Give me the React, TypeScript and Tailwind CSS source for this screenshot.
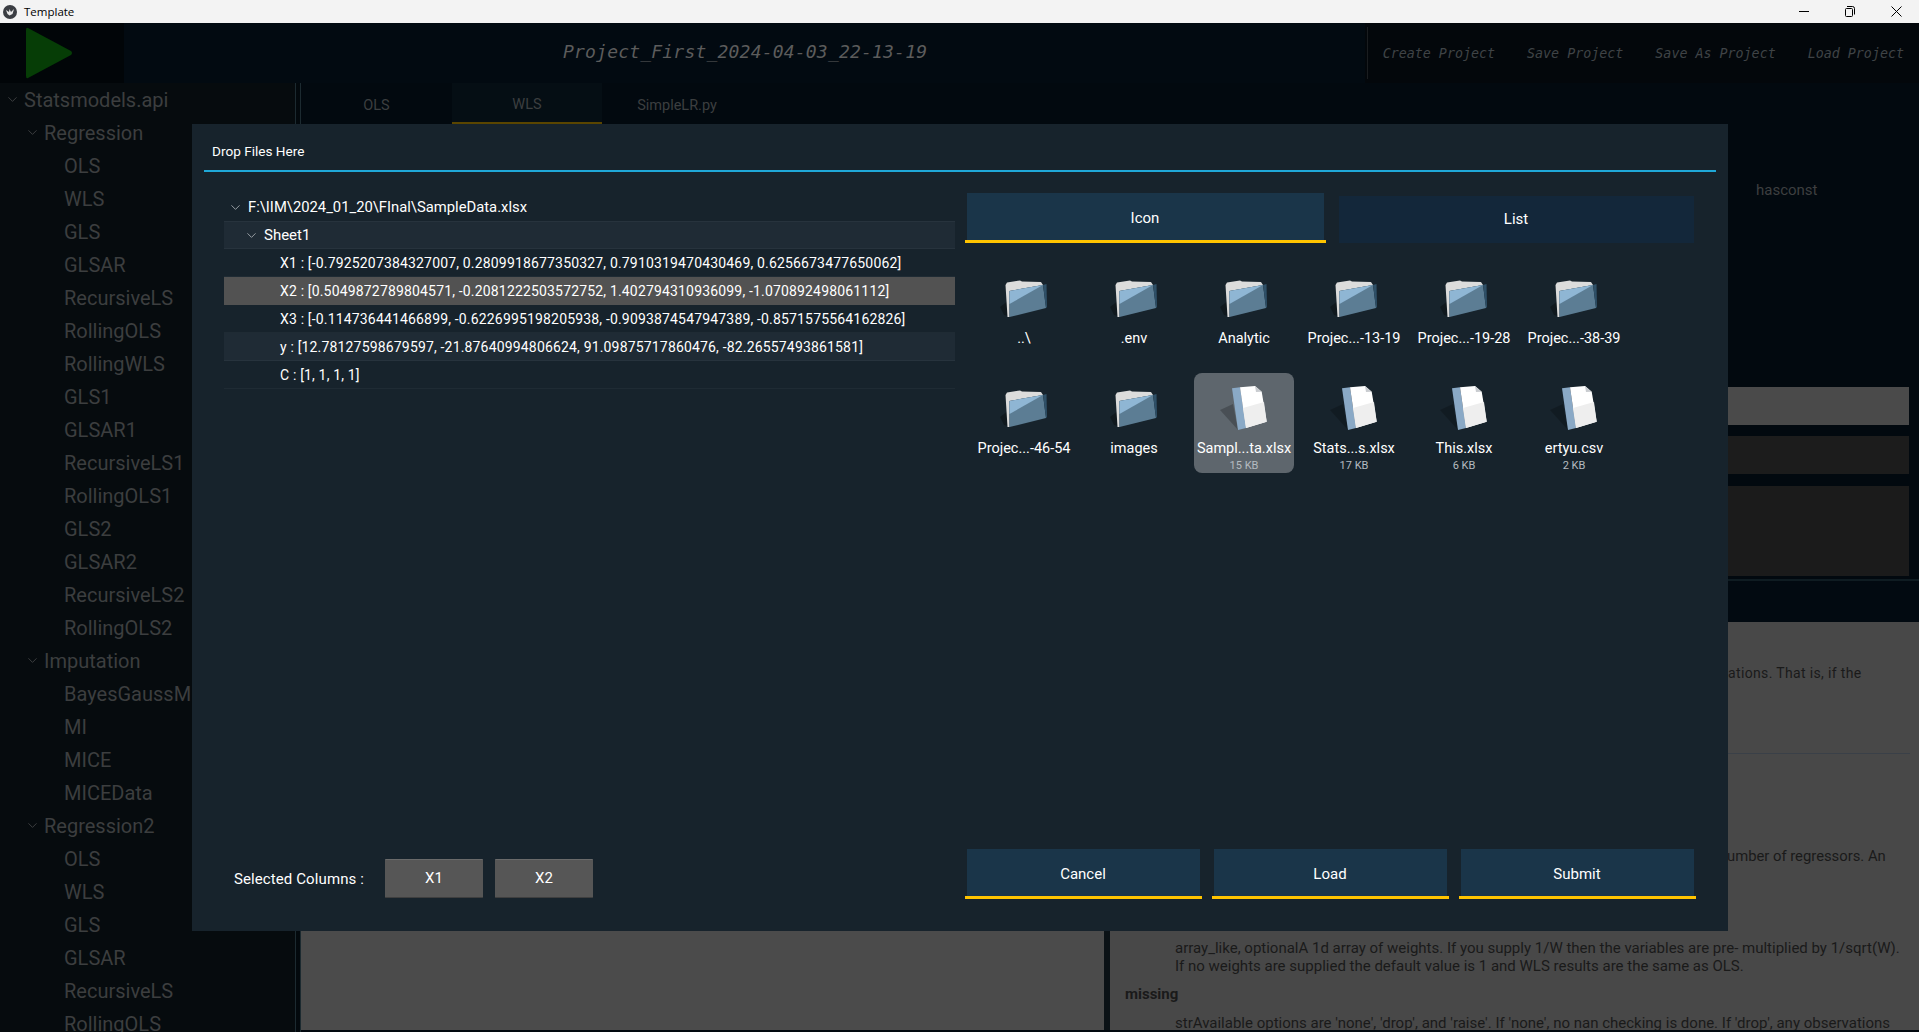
import { ChevronDown } from "lucide-react";

const sans = "font-['Roboto',sans-serif]";

type TreeItem = { label: string; level: number; open?: boolean };

const apiTree: TreeItem[] = [
  { label: "Statsmodels.api", level: 0, open: true },
  { label: "Regression", level: 1, open: true },
  ...["OLS", "WLS", "GLS", "GLSAR", "RecursiveLS", "RollingOLS", "RollingWLS", "GLS1", "GLSAR1", "RecursiveLS1", "RollingOLS1", "GLS2", "GLSAR2", "RecursiveLS2", "RollingOLS2"].map((label) => ({ label, level: 2 })),
  { label: "Imputation", level: 1, open: true },
  ...["BayesGaussMI", "MI", "MICE", "MICEData"].map((label) => ({ label, level: 2 })),
  { label: "Regression2", level: 1, open: true },
  ...["OLS", "WLS", "GLS", "GLSAR", "RecursiveLS", "RollingOLS"].map((label) => ({ label, level: 2 })),
];

const dataRows = [
  { text: "X1 : [-0.7925207384327007, 0.2809918677350327, 0.7910319470430469, 0.6256673477650062]", cls: "border-[#1f2b34]" },
  { text: "X2 : [0.5049872789804571, -0.2081222503572752, 1.402794310936099, -1.070892498061112]", cls: "bg-[#525252] border-[#525252]" },
  { text: "X3 : [-0.114736441466899, -0.6226995198205938, -0.9093874547947389, -0.8571575564162826]", cls: "border-[#1f2b34]" },
  { text: "y : [12.78127598679597, -21.87640994806624, 91.09875717860476, -82.26557493861581]", cls: "bg-[#1f2b35] border-[#27333d]" },
  { text: "C : [1, 1, 1, 1]", cls: "border-[#1f2b34]" },
];

const files = [
  { name: "..\\", kind: "folder" },
  { name: ".env", kind: "folder" },
  { name: "Analytic", kind: "folder" },
  { name: "Projec...-13-19", kind: "folder" },
  { name: "Projec...-19-28", kind: "folder" },
  { name: "Projec...-38-39", kind: "folder" },
  { name: "Projec...-46-54", kind: "folder" },
  { name: "images", kind: "folder" },
  { name: "Sampl...ta.xlsx", kind: "file", size: "15 KB", selected: true },
  { name: "Stats...s.xlsx", kind: "file", size: "17 KB" },
  { name: "This.xlsx", kind: "file", size: "6 KB" },
  { name: "ertyu.csv", kind: "file", size: "2 KB" },
];

function FolderIcon() {
  return (
    <svg width="47" height="38" viewBox="0 0 47 38">
      <polygon points="0,27 9,20 9,36 4,35" fill="#000" opacity="0.3" />
      <polygon points="5.5,5 7,2.5 20,0.5 22,1.5 41,2 43,5 9.5,11 9.5,37 7.5,37" fill="#dcdcdc" />
      <polygon points="9.5,11 43,5 46,28 9.5,37" fill="#5c7d94" />
      <polygon points="9.5,11 43,5 9.5,24" fill="#8fb6d4" />
      <polygon points="43,5 46.5,4 47,27 46,28" fill="#2f5068" />
    </svg>
  );
}

function FileIcon() {
  return (
    <svg width="47" height="45" viewBox="0 0 47 45">
      <polygon points="0,24 13,18 18,44" fill="#000" opacity="0.22" />
      <polygon points="12,2.3 20,1.3 26,42 18,44" fill="#8aa9c6" />
      <polygon points="20,1.3 35,0 41.7,5.7 46.7,35.7 26,42" fill="#ffffff" />
      <polygon points="23,22 44,16 46.7,35.7 26,42" fill="#eeeeee" />
      <polygon points="35,0 41.7,5.7 36,6" fill="#c9ccd0" />
    </svg>
  );
}

function KivyLogo() {
  return (
    <svg width="14" height="14" viewBox="0 0 14 14">
      <circle cx="7" cy="7" r="7" fill="#3a3d42" />
      <path d="M3 5 L6 7 L6.5 4 L8 7 L11 4 L9.5 9 L6.5 10.5 L4.5 9 Z" fill="#e8e8e8" />
    </svg>
  );
}

function YellowButton({ label, active = true, bg = "bg-[#1a3549]" }: { label: string; active?: boolean; bg?: string }) {
  return (
    <div className={`flex flex-col ${active ? "" : "pt-[3px]"}`}>
      <div className={`mx-[2px] flex flex-1 items-center justify-center pr-[1px] text-[15px] text-white ${bg} ${active ? "pt-[3px]" : ""}`}>{label}</div>
      {active && <div className="h-[3px] bg-[#ffc400]" />}
    </div>
  );
}

export default function App() {
  return (
    <div className={`relative flex h-[1032px] w-full flex-col overflow-hidden bg-[#02090f] ${sans}`}>
      {/* window title bar */}
      <div className="flex h-[23px] shrink-0 items-center bg-[#f3f3f3]">
        <div className="ml-[3px] mr-[7px] flex">
          <KivyLogo />
        </div>
        <span className="font-['Open_Sans',sans-serif] text-[11.5px] text-black">Template</span>
        <div className="ml-auto flex items-center text-black">
          <div className="flex w-[46px] justify-center">
            <div className="h-px w-[10px] bg-black" />
          </div>
          <div className="flex w-[46px] justify-center pr-[2px]">
            <svg width="11" height="11" viewBox="0 0 11 11" fill="none" stroke="#000">
              <rect x="1.5" y="2.5" width="7" height="8" rx="1" />
              <path d="M3 0.5h5.5a2 2 0 0 1 2 2v6" />
            </svg>
          </div>
          <div className="flex w-[46px] justify-center">
            <svg width="11" height="11" viewBox="0 0 11 11" stroke="#000">
              <path d="M0.5 0.5l10 10M10.5 0.5l-10 10" />
            </svg>
          </div>
        </div>
      </div>

      {/* app header */}
      <div className="flex h-[60px] shrink-0 bg-[#020a11] font-['DejaVu_Sans_Mono',monospace] italic">
        <div className="flex w-[124px] shrink-0 items-center bg-[#010508] pl-[26px]">
          <svg width="46" height="52" viewBox="0 0 46 52">
            <path d="M2 1 L45 24 Q47 26 45 28 L2 51 Q0 52 0 49 V3 Q0 0 2 1 Z" fill="#063d06" />
          </svg>
        </div>
        <div className="flex flex-1 items-center pb-[4px] pl-[439px] text-[18px] tracking-[0.2px] text-[#5c5c5c]">Project_First_2024-04-03_22-13-19</div>
        <div className="flex items-center gap-[32px] bg-[#03070b] pl-[18px] pr-[15px] pt-[2px] text-[13.33px] text-[#3f4346]">
          <div className="absolute left-[1367px] top-[27px] h-[52px] w-px bg-[#1a1d20]" />
          <span>Create Project</span>
          <span>Save Project</span>
          <span>Save As Project</span>
          <span>Load Project</span>
        </div>
      </div>

      <div className="flex min-h-0 flex-1">
        {/* api tree */}
        <div className="w-[295px] shrink-0 overflow-hidden bg-[#060b0e]">
          {apiTree.map((item, i) => (
            <div key={i} className={`flex h-[33px] shrink-0 items-center text-[20px] leading-none text-[#3c3e3f] ${item.level === 0 ? "pl-[5px]" : item.level === 1 ? "pl-[25px]" : "pl-[64px]"}`}>
              {item.open && <ChevronDown size={15} strokeWidth={1.25} className="mr-[4px] shrink-0 text-[#4a4c4d]" />}
              <span className="whitespace-nowrap">{item.label}</span>
            </div>
          ))}
        </div>
        <div className="w-[6px] shrink-0 border-x border-[#1c2a30] bg-[#03090d]" />

        <div className="flex min-w-0 flex-1 flex-col">
          {/* editor tabs */}
          <div className="flex h-[41px] shrink-0 bg-[#02090f] text-[14.5px] text-[#3c3f40]">
            <div className="flex w-[151px] items-center justify-center pt-[4px]">OLS</div>
            <div className="flex w-[150px] items-center justify-center border-b-2 border-[#5a4500] bg-[#050e14] pt-[4px]">WLS</div>
            <div className="flex w-[150px] items-center justify-center pt-[4px]">SimpleLR.py</div>
          </div>

          <div className="flex min-h-0 flex-1 pb-[2px]">
            <div className="flex w-[803px] shrink-0 flex-col justify-end">
              <div className="h-[200px] bg-[#4b4b4b]" />
            </div>
            <div className="w-[6px] shrink-0 bg-[#0b1216]" />

            <div className="flex min-w-0 flex-1 flex-col">
              <div className="h-[455px] shrink-0 pr-[10px] pt-[55px]">
                <div className="h-[27px] pl-[646px] text-[15px] text-[#3d3f40]">hasconst</div>
                <div className="mt-[181px] h-[38px] bg-[#4a4a4a]" />
                <div className="mt-[11px] h-[38px] bg-[#1c1c1c]" />
                <div className="mt-[12px] h-[90px] bg-[#1b1b1b]" />
              </div>
              <div className="flex h-[43px] shrink-0 border-t-2 border-[#0f1c22] bg-[#020a11]" />
              {/* api documentation */}
              <div className="flex-1 overflow-hidden bg-[#484848] pl-[15px] text-[15px] text-[#1a1a1a]">
                <p className="mb-[69px] mt-[41px] whitespace-nowrap pl-[603px] text-[14px] tracking-[0.35px]">ations. That is, if the</p>
                <div className="mr-[9px] h-px bg-[#3a4048]" />
                <p className="mt-[91px] whitespace-nowrap pl-[602px] text-[14.8px]">umber of regressors. An</p>
                <div className="mt-[72px] whitespace-nowrap pl-[50px] leading-[18px]">
                  <p>array_like, optionalA 1d array of weights. If you supply 1/W then the variables are pre- multiplied by 1/sqrt(W).</p>
                  <p>If no weights are supplied the default value is 1 and WLS results are the same as OLS.</p>
                </div>
                <p className="mt-[8px] font-bold">missing</p>
                <p className="mt-[8px] whitespace-nowrap pl-[50px] leading-[18px]">strAvailable options are 'none', 'drop', and 'raise'. If 'none', no nan checking is done. If 'drop', any observations</p>
              </div>
            </div>
          </div>
        </div>
      </div>

      {/* file dialog */}
      <div className="absolute left-[192px] top-[124px] flex h-[807px] w-[1536px] flex-col bg-[#17232c]">
        <div className="ml-[12px] mr-[12px] flex h-[48px] shrink-0 items-center border-b-2 border-[#1fa8d8] pl-[8px] pt-[8px] text-[13.6px] text-white">Drop Files Here</div>

        <div className="flex min-h-0 flex-1 gap-[10px] pb-[32px] pl-[32px] pr-[32px] pt-[21px]">
          {/* sheet tree */}
          <div className="flex w-[731px] shrink-0 flex-col justify-between">
            <div className="text-[14px] text-white">
              <div className="flex h-[28px] items-center pl-[4px] text-[14.8px]">
                <ChevronDown size={15} strokeWidth={1.25} className="mr-[5px] text-[#b9bec2]" />
                <span>F:\IIM\2024_01_20\FInal\SampleData.xlsx</span>
              </div>
              <div className="flex h-[28px] items-center border-y border-[#27333d] bg-[#1f2b35] pl-[20px] text-[15px]">
                <ChevronDown size={15} strokeWidth={1.25} className="mr-[5px] text-[#b9bec2]" />
                <span>Sheet1</span>
              </div>
              {dataRows.map((row) => (
                <div key={row.text} className={`flex h-[28px] items-center border-b pl-[56px] pt-[1px] tracking-[0.17px] ${row.cls}`}>{row.text}</div>
              ))}
            </div>
            <div className="flex items-center pb-[1px] pl-[10px] text-[15px] text-white">
              <span className="w-[151px] pt-[2px] tracking-[0.1px]">Selected Columns :</span>
              {["X1", "X2"].map((col) => (
                <div key={col} className="mr-[12px] flex h-[39px] w-[98px] items-center justify-center rounded-[1px] border-y border-t-[#6a6a6a] border-b-[#3f3f3f] bg-[#565656]">{col}</div>
              ))}
            </div>
          </div>

          <div className="flex min-w-0 flex-1 flex-col">
            <div className="grid h-[50px] shrink-0 grid-cols-[361px_359px] gap-[11px]">
              <YellowButton label="Icon" />
              <YellowButton label="List" active={false} bg="bg-[#13273a]" />
            </div>
            {/* file browser */}
            <div className="mt-[20px] grid grid-cols-[repeat(6,100px)] gap-[10px] pl-[9px]">
              {files.map((f) => (
                <div key={f.name} className={`flex h-[100px] flex-col items-center rounded-[8px] pt-[13px] ${f.selected ? "bg-[#5e666d]" : ""}`}>
                  <div className="mr-[2px] flex h-[45px] items-center">{f.kind === "folder" ? <FolderIcon /> : <FileIcon />}</div>
                  <div className="mt-[8px] whitespace-nowrap text-[14.5px] leading-[20px] text-white">{f.name}</div>
                  {f.size && <div className="text-[11px] leading-[14px] text-[#b5bbc0]">{f.size}</div>}
                </div>
              ))}
            </div>
            <div className="mt-auto grid h-[50px] shrink-0 grid-cols-[237px_237px_237px] gap-[10px]">
              <YellowButton label="Cancel" />
              <YellowButton label="Load" />
              <YellowButton label="Submit" />
            </div>
          </div>
        </div>
      </div>
    </div>
  );
}
